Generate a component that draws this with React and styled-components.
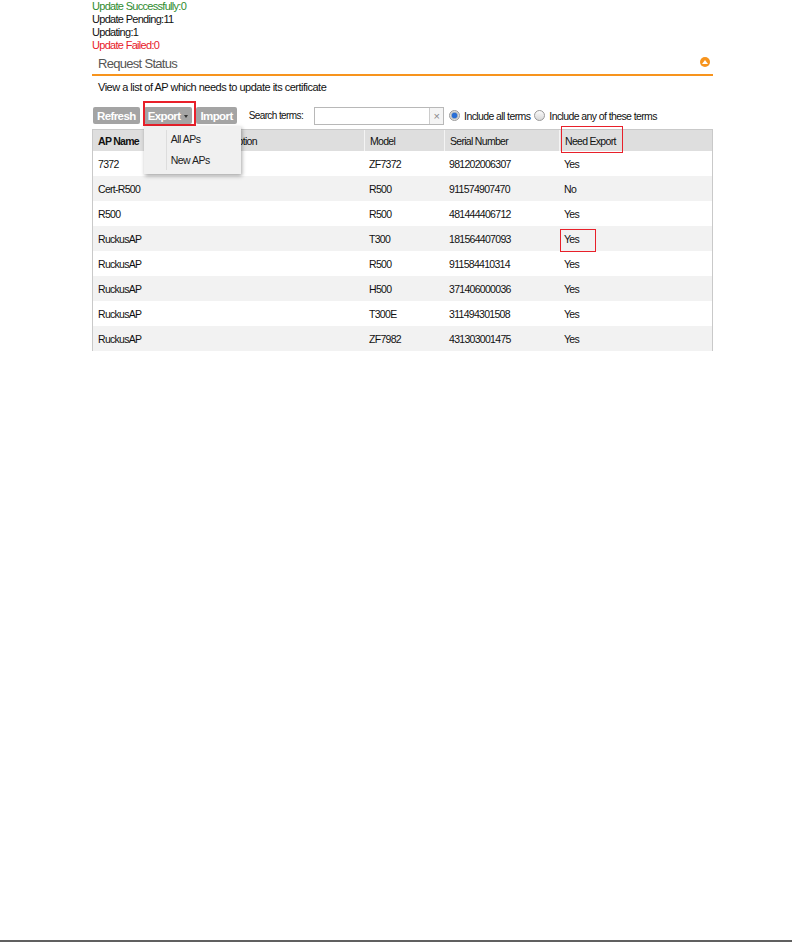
import React from "react";
import styled, { createGlobalStyle } from "styled-components";

const Global = createGlobalStyle`
  html, body { margin: 0; padding: 0; background: #fff; }
  body { font-family: "Liberation Sans", Arial, sans-serif; color: #222; }
  #root { min-height: 943px; position: relative; }
`;

const Page = styled.div`
  width: 621px;
  margin-left: 92px;
  position: relative;
`;

const StatusList = styled.div`
  display: flex;
  flex-direction: column;
`;

const StatusLine = styled.div`
  font-size: 11px;
  letter-spacing: -0.7px;
  line-height: 13px;
  height: 13px;
  color: ${(p) => p.$color || "#111"};
`;

const SectionHeader = styled.div`
  margin-top: 1px;
  height: 21px;
  display: flex;
  align-items: center;
  justify-content: space-between;
  padding: 0 3px 0 6px;
  border-bottom: 2px solid #f7941d;
`;

const SectionTitle = styled.span`
  font-size: 13px;
  letter-spacing: -0.7px;
  color: #555;
`;

const CollapseIcon = styled.span`
  width: 10px;
  height: 10px;
  border-radius: 50%;
  background: #f7941d;
  display: flex;
  align-items: center;
  justify-content: center;
  margin-top: -3px;
  &::after {
    content: "";
    width: 0;
    height: 0;
    border-left: 3px solid transparent;
    border-right: 3px solid transparent;
    border-bottom: 4px solid #fff;
    margin-top: -1px;
  }
`;

const Description = styled.div`
  padding-left: 6px;
  font-size: 11px;
  letter-spacing: -0.5px;
  line-height: 13px;
  margin-top: 5px;
  color: #111;
`;

const Toolbar = styled.div`
  margin-top: 12px;
  display: flex;
  align-items: center;
  height: 19px;
  padding-left: 1px;
  position: relative;
`;

const Button = styled.button`
  height: 17px;
  padding: 0 4px;
  border: none;
  border-radius: 2px;
  background: #a4a4a4;
  color: #fff;
  font-family: inherit;
  font-weight: bold;
  font-size: 11.5px;
  letter-spacing: -0.6px;
  display: flex;
  align-items: center;
  gap: 4px;
  margin-right: 4px;
  cursor: pointer;
`;

const Caret = styled.span`
  width: 0;
  height: 0;
  border-left: 2.5px solid transparent;
  border-right: 2.5px solid transparent;
  border-top: 3px solid #333;
  margin-top: 2px;
`;

const ButtonWrap = styled.div`
  position: relative;
  display: flex;
`;

const RedBox = styled.div`
  position: absolute;
  box-sizing: border-box;
  border: ${(p) => p.$w || 1}px solid #e8202a;
  pointer-events: none;
`;

const Menu = styled.div`
  position: absolute;
  left: 0;
  top: 19px;
  width: 97px;
  height: 48px;
  background: #f0f0f0;
  box-shadow: 1px 2px 4px rgba(0, 0, 0, 0.35);
  z-index: 5;
  display: flex;
  flex-direction: column;
  padding-left: 27px;
  box-sizing: border-box;
  &::before {
    content: "";
    position: absolute;
    left: 22px;
    top: 4px;
    bottom: 4px;
    border-left: 1px solid #ddd;
  }
`;

const MenuItem = styled.div`
  font-size: 10.5px;
  letter-spacing: -0.5px;
  height: 21px;
  line-height: 21px;
  color: #222;
  &:first-child { margin-top: 3px; }
`;

const SearchLabel = styled.span`
  font-size: 10px;
  letter-spacing: -0.6px;
  margin-left: 8px;
  margin-right: 11px;
  color: #111;
`;

const SearchBox = styled.div`
  width: 130px;
  height: 18px;
  border: 1px solid #b8b8b8;
  display: flex;
  box-sizing: border-box;
  background: #fff;
`;

const SearchInput = styled.input`
  flex: 1;
  border: none;
  outline: none;
  min-width: 0;
  padding: 0 3px;
  font-family: inherit;
`;

const ClearBtn = styled.span`
  width: 13px;
  border-left: 1px solid #ccc;
  background: #f4f4f4;
  color: #888;
  font-size: 11px;
  display: flex;
  align-items: center;
  justify-content: center;
`;

const RadioGroup = styled.label`
  display: flex;
  align-items: center;
  gap: 4px;
  font-size: 10.5px;
  letter-spacing: -0.6px;
  color: #111;
  margin-left: ${(p) => p.$ml || 4}px;
`;

const Radio = styled.span`
  width: 9px;
  height: 9px;
  border-radius: 50%;
  border: 1px solid #999;
  background: ${(p) =>
    p.$checked
      ? "radial-gradient(circle, #2a6fd6 0 2.5px, #9ab 3px, #ddd 4px)"
      : "linear-gradient(#fafafa, #d8d8d8)"};
`;

const Table = styled.div`
  margin-top: 4px;
  border-left: 1px solid #c9c9c9;
  border-right: 1px solid #c9c9c9;
  position: relative;
`;

const Row = styled.div`
  display: grid;
  grid-template-columns: 113px 158px 80px 115px 1fr;
  height: ${(p) => (p.$header ? 22 : 25)}px;
  background: ${(p) => (p.$header ? "#dedede" : p.$alt ? "#f2f2f2" : "#fff")};
  border-top: ${(p) => (p.$header ? "1px solid #c9c9c9" : "none")};
  box-sizing: border-box;
`;

const Cell = styled.div`
  position: relative;
  display: flex;
  align-items: center;
  padding-left: 5px;
  font-size: 10.5px;
  letter-spacing: -0.7px;
  color: #111;
  font-weight: ${(p) => (p.$bold ? "bold" : "normal")};
  border-left: ${(p) => (p.$divider ? "1px solid #f4f4f4" : "none")};
  white-space: nowrap;
`;

const BottomRule = styled.div`
  position: absolute;
  left: 0;
  right: 0;
  top: 940px;
  height: 2px;
  background: #606060;
`;

const rows = [
  ["7372", "", "ZF7372", "981202006307", "Yes"],
  ["Cert-R500", "", "R500", "911574907470", "No"],
  ["R500", "", "R500", "481444406712", "Yes"],
  ["RuckusAP", "", "T300", "181564407093", "Yes"],
  ["RuckusAP", "", "R500", "911584410314", "Yes"],
  ["RuckusAP", "", "H500", "371406000036", "Yes"],
  ["RuckusAP", "", "T300E", "311494301508", "Yes"],
  ["RuckusAP", "", "ZF7982", "431303001475", "Yes"],
];

export default function App() {
  return (
    <>
      <Global />
      <Page>
        <StatusList>
          <StatusLine $color="#2e8b2e">Update Successfully:0</StatusLine>
          <StatusLine>Update Pending:11</StatusLine>
          <StatusLine>Updating:1</StatusLine>
          <StatusLine $color="#e8202a">Update Failed:0</StatusLine>
        </StatusList>
        <SectionHeader>
          <SectionTitle>Request Status</SectionTitle>
          <CollapseIcon />
        </SectionHeader>
        <Description>View a list of AP which needs to update its certificate</Description>
        <Toolbar>
          <Button>Refresh</Button>
          <ButtonWrap>
            <Button>
              Export <Caret />
            </Button>
            <RedBox $w={2} style={{ left: -1, top: -6, width: 53, height: 25 }} />
            <Menu>
              <MenuItem>All APs</MenuItem>
              <MenuItem>New APs</MenuItem>
            </Menu>
          </ButtonWrap>
          <Button>Import</Button>
          <SearchLabel>Search terms:</SearchLabel>
          <SearchBox>
            <SearchInput />
            <ClearBtn>×</ClearBtn>
          </SearchBox>
          <RadioGroup $ml={5}>
            <Radio $checked />
            Include all terms
          </RadioGroup>
          <RadioGroup $ml={4}>
            <Radio />
            Include any of these terms
          </RadioGroup>
        </Toolbar>
        <Table>
          <Row $header>
            <Cell $bold>AP Name</Cell>
            <Cell $divider>Description</Cell>
            <Cell $divider>Model</Cell>
            <Cell $divider>Serial Number</Cell>
            <Cell $divider>
              Need Export
              <RedBox style={{ left: 1, top: -4, width: 62, height: 27 }} />
            </Cell>
          </Row>
          {rows.map((r, i) => (
            <Row key={i} $alt={i % 2 === 1}>
              <Cell>{r[0]}</Cell>
              <Cell>{r[1]}</Cell>
              <Cell>{r[2]}</Cell>
              <Cell>{r[3]}</Cell>
              <Cell>
                {r[4]}
                {i === 3 && <RedBox style={{ left: 1, top: 3, width: 36, height: 23 }} />}
              </Cell>
            </Row>
          ))}
        </Table>
      </Page>
      <BottomRule />
    </>
  );
}
